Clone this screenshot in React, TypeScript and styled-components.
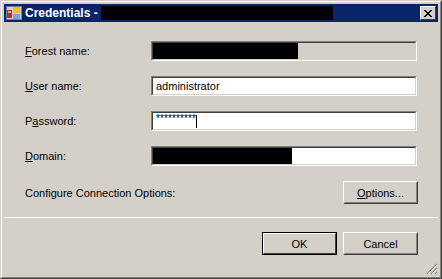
import { createGlobalStyle } from 'styled-components'
import styled from 'styled-components'

const GlobalStyle = createGlobalStyle`
  html, body {
    margin: 0;
    padding: 0;
    background: #d4d0c8;
  }
  body {
    font-family: 'Liberation Sans', Arial, sans-serif;
    font-size: 11px;
    color: #000;
  }
`

const Frame = styled.div`
  width: 442px;
  height: 279px;
  box-sizing: border-box;
  background: #d4d0c8;
  border: 1px solid;
  border-color: #d4d0c8 #404040 #404040 #d4d0c8;
  position: relative;
`

const InnerFrame = styled.div`
  height: 100%;
  box-sizing: border-box;
  border: 1px solid;
  border-color: #ffffff #808080 #808080 #ffffff;
  padding: 2px;
  display: flex;
  flex-direction: column;
`

const TitleBar = styled.div`
  height: 18px;
  background: #0a246a;
  display: flex;
  align-items: center;
  padding: 0 2px 0 2px;
  gap: 3px;
`

const TitleText = styled.span`
  color: #fff;
  font-weight: bold;
  font-size: 12px;
  font-family: 'Liberation Sans', Tahoma, sans-serif;
  white-space: nowrap;
`

const Redact = styled.div<{ $w: number; $h: number }>`
  width: ${(p) => p.$w}px;
  height: ${(p) => p.$h}px;
  background: #000;
  flex: none;
`

const CloseButton = styled.div`
  margin-left: auto;
  width: 16px;
  height: 14px;
  box-sizing: border-box;
  background: #d4d0c8;
  border: 1px solid;
  border-color: #fff #404040 #404040 #fff;
  display: flex;
  align-items: center;
  justify-content: center;
`

const Body = styled.div`
  flex: 1;
  display: flex;
  flex-direction: column;
  padding: 19px 21px 0 21px;
  position: relative;
`

const Row = styled.div`
  display: flex;
  align-items: center;
  height: 20px;
  margin-bottom: 15px;
`

const Label = styled.div`
  width: 126px;
  flex: none;
`

const Mn = styled.span`
  text-decoration: underline;
`

const Field = styled.div<{ $disabled?: boolean }>`
  flex: 1;
  height: 20px;
  box-sizing: border-box;
  background: ${(p) => (p.$disabled ? '#d4d0c8' : '#fff')};
  border-top: 1px solid #808080;
  border-left: 1px solid #808080;
  border-right: 1px solid #fff;
  border-bottom: 1px solid #fff;
  display: flex;
`

const FieldInner = styled.div`
  flex: 1;
  border-top: 1px solid #404040;
  border-left: 1px solid #404040;
  border-right: 1px solid #d4d0c8;
  border-bottom: 1px solid #d4d0c8;
  display: flex;
  align-items: center;
  padding-left: 3px;
  overflow: hidden;
`

const FieldRedact = styled.div<{ $w: number }>`
  width: ${(p) => p.$w}px;
  align-self: stretch;
  margin-left: -3px;
  background: #000;
`

const Stars = styled.span`
  font-size: 10px;
  line-height: 10px;
  align-self: flex-start;
  margin-top: 1px;
  letter-spacing: 0.1px;
`

const Caret = styled.span`
  display: inline-block;
  width: 1px;
  height: 13px;
  background: #000;
`

const OptionsRow = styled.div`
  display: flex;
  align-items: center;
  justify-content: space-between;
  height: 23px;
  margin-right: -1px;
`

const Button = styled.div<{ $default?: boolean }>`
  width: 75px;
  height: 23px;
  box-sizing: border-box;
  background: #d4d0c8;
  border: 1px solid;
  border-color: ${(p) => (p.$default ? '#000' : '#fff #404040 #404040 #fff')};
  display: flex;
  align-items: center;
  justify-content: center;
  position: relative;
  &::after {
    content: '';
    position: absolute;
    inset: 0;
    border: 1px solid;
    border-color: ${(p) =>
      p.$default ? '#fff #404040 #404040 #fff' : 'transparent #808080 #808080 transparent'};
  }
`

const Separator = styled.div`
  height: 1px;
  background: #fff;
  margin: 12px -21px 14px -21px;
  border-top: 1px solid #d4d0c8;
`

const ButtonRow = styled.div`
  display: flex;
  justify-content: flex-end;
  gap: 6px;
  margin-right: -1px;
`

const Grip = styled.svg`
  position: absolute;
  right: 0;
  bottom: 0;
`

function WinIcon() {
  return (
    <svg width="16" height="16" viewBox="0 0 16 16">
      <rect x="0.5" y="1.5" width="15" height="13" fill="#d4d0c8" stroke="#6a7fa8" />
      <rect x="1" y="5" width="5" height="8" fill="#c8281c" />
      <rect x="7" y="2" width="7" height="6" fill="#f4c020" />
      <rect x="7" y="9" width="7" height="5" fill="#7aa6e0" />
      <rect x="2" y="6" width="3" height="2" fill="#fff" opacity="0.6" />
    </svg>
  )
}

export default function App() {
  return (
    <>
      <GlobalStyle />
      <Frame>
        <InnerFrame>
          <TitleBar>
            <WinIcon />
            <TitleText>Credentials -</TitleText>
            <Redact $w={232} $h={14} />
            <CloseButton>
              <svg width="8" height="7" viewBox="0 0 8 7">
                <path d="M0 0 L7 7 M1 0 L8 7 M7 0 L0 7 M8 0 L1 7" stroke="#000" strokeWidth="1" />
              </svg>
            </CloseButton>
          </TitleBar>
          <Body>
            <Row>
              <Label>
                <Mn>F</Mn>orest name:
              </Label>
              <Field $disabled>
                <FieldInner>
                  <FieldRedact $w={145} />
                </FieldInner>
              </Field>
            </Row>
            <Row>
              <Label>
                <Mn>U</Mn>ser name:
              </Label>
              <Field>
                <FieldInner>administrator</FieldInner>
              </Field>
            </Row>
            <Row>
              <Label>
                P<Mn>a</Mn>ssword:
              </Label>
              <Field>
                <FieldInner>
                  <Stars>**********</Stars>
                  <Caret />
                </FieldInner>
              </Field>
            </Row>
            <Row>
              <Label>
                <Mn>D</Mn>omain:
              </Label>
              <Field>
                <FieldInner>
                  <FieldRedact $w={139} />
                </FieldInner>
              </Field>
            </Row>
            <OptionsRow>
              <span>Configure Connection Options:</span>
              <Button>
                <span>
                  <Mn>O</Mn>ptions...
                </span>
              </Button>
            </OptionsRow>
            <Separator />
            <ButtonRow>
              <Button $default>OK</Button>
              <Button>Cancel</Button>
            </ButtonRow>
            <Grip width="12" height="12" viewBox="0 0 12 12">
              <path d="M11 1 L1 11 M11 5 L5 11 M11 9 L9 11" stroke="#808080" strokeWidth="1.2" />
              <path d="M11 2 L2 11 M11 6 L6 11 M11 10 L10 11" stroke="#fff" strokeWidth="0.8" />
            </Grip>
          </Body>
        </InnerFrame>
      </Frame>
    </>
  )
}
